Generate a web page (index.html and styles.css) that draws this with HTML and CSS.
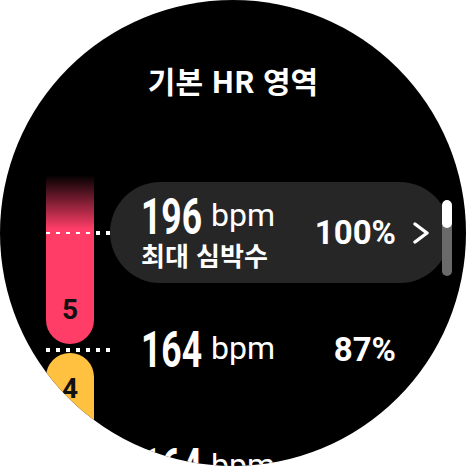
FILE: index.html
```html
<!DOCTYPE html>
<html lang="ko">
<head>
<meta charset="utf-8">
<title>기본 HR 영역</title>
<link rel="stylesheet" href="styles.css">
</head>
<body>
<div class="screen">
  <h1 class="title">기본 HR 영역</h1>
  <div class="main">
    <div class="zones">
      <div class="zone z5"><span>5</span></div>
      <div class="zone z4"><span>4</span></div>
    </div>

    <div class="row r1">
      <div class="leader">
        <span class="lead-bar thin"></span><span class="lead-gap"></span>
      </div>
      <div class="item pill">
        <div class="val">
          <div class="line"><span class="num">196</span><span class="unit">bpm</span></div>
          <div class="label">최대 심박수</div>
        </div>
        <div class="pct">100%</div>
        <svg class="chev" width="16" height="22" viewBox="0 0 16 22"><polyline points="2,2 14,11 2,20" fill="none" stroke="#fff" stroke-width="3.4" stroke-linecap="round" stroke-linejoin="round"/></svg>
      </div>
    </div>

    <div class="row r2">
      <div class="leader">
        <span class="lead-full"></span>
      </div>
      <div class="item">
        <div class="val">
          <div class="line"><span class="num">164</span><span class="unit">bpm</span></div>
        </div>
        <div class="pct">87%</div>
        <svg class="chev hidden" width="16" height="22" viewBox="0 0 16 22"></svg>
      </div>
    </div>

    <div class="row r3">
      <div class="leader"></div>
      <div class="item">
        <div class="val">
          <div class="line"><span class="num">164</span><span class="unit">bpm</span></div>
        </div>
        <div class="pct">87%</div>
        <svg class="chev hidden" width="16" height="22" viewBox="0 0 16 22"></svg>
      </div>
    </div>
  </div>
  <div class="scrollbar"></div>
</div>
</body>
</html>
```
FILE: styles.css
```css
html, body {
  margin: 0;
  padding: 0;
  background: #fff;
}

.screen {
  position: relative;
  width: 466px;
  height: 466px;
  border-radius: 50%;
  background: #000;
  overflow: hidden;
  display: flex;
  flex-direction: column;
  color: #fff;
  font-family: Roboto, "Noto Sans CJK KR", sans-serif;
}

.title {
  margin: 60px 0 0;
  height: 40px;
  line-height: 40px;
  text-align: center;
  font-family: "Noto Sans CJK KR", sans-serif;
  font-weight: 700;
  font-size: 30px;
}

.main {
  margin-top: 74px;
  padding-left: 46px;
  display: grid;
  grid-template-columns: 48px 16px 1fr;
  grid-template-rows: 117px 117px 117px;
}

.zones {
  grid-column: 1;
  grid-row: 1 / 4;
  display: flex;
  flex-direction: column;
  gap: 9px;
  padding-top: 1px;
}

.zone {
  display: flex;
  justify-content: center;
  color: #111;
  font-family: Roboto, sans-serif;
  font-weight: 700;
  font-size: 28px;
  line-height: 28px;
}

.z5 {
  height: 169px;
  box-sizing: border-box;
  align-items: flex-end;
  padding-bottom: 20px;
  border-radius: 0 0 24px 24px;
  background: linear-gradient(to bottom, #000 0, #ff3d67 54px, #ff3d67 100%);
}

.z4 {
  flex: 1;
  align-items: flex-start;
  padding-top: 22px;
  border-radius: 24px 24px 0 0;
  background: #ffc13f;
}

.row {
  grid-column: 1 / 4;
  display: flex;
  align-items: center;
}

.r1 { grid-row: 1; }
.r2 { grid-row: 2; }
.r3 { grid-row: 3; }

.leader {
  width: 64px;
  flex: none;
  display: flex;
  align-items: center;
}

.lead-bar {
  width: 48px;
  height: 2px;
  background: repeating-linear-gradient(90deg, #fff 0 4px, transparent 4px 10px);
}

.lead-gap {
  width: 16px;
  height: 4px;
  background: repeating-linear-gradient(90deg, transparent 0 2px, #fff 2px 6px, transparent 6px 10px);
}

.lead-full {
  width: 64px;
  height: 4px;
  background: repeating-linear-gradient(90deg, #fff 0 4px, transparent 4px 10px);
}

.item {
  flex: 1;
  display: flex;
  align-items: center;
  padding-left: 31px;
  padding-right: 21px;
  margin-right: 16px;
}

.pill {
  height: 101px;
  border-radius: 51px;
  background: #262626;
}

.val {
  display: flex;
  flex-direction: column;
  gap: 5px;
}

.line {
  display: flex;
  align-items: flex-end;
  height: 40px;
  white-space: nowrap;
}

.num {
  display: inline-block;
  width: 60px;
  font-weight: 700;
  font-size: 50px;
  line-height: 40px;
  transform: scaleX(0.71);
  transform-origin: left center;
}

.unit {
  margin-left: 10px;
  margin-bottom: 6px;
  font-weight: 400;
  font-size: 32px;
  line-height: 31px;
}

.label {
  font-family: "Noto Sans CJK KR", sans-serif;
  font-weight: 700;
  font-size: 26px;
  line-height: 26px;
  white-space: nowrap;
}

.pct {
  margin-left: auto;
  font-weight: 700;
  font-size: 33px;
  line-height: 33px;
}

.chev {
  flex: none;
  margin-left: 17px;
}

.hidden {
  visibility: hidden;
}

.scrollbar {
  position: absolute;
  left: 442px;
  top: 200px;
  width: 10px;
  height: 76px;
  border-radius: 5px;
  background: #6a6a6a;
  overflow: hidden;
}

.scrollbar::before {
  content: "";
  display: block;
  height: 28px;
  border-radius: 5px;
  background: #fff;
}
```
